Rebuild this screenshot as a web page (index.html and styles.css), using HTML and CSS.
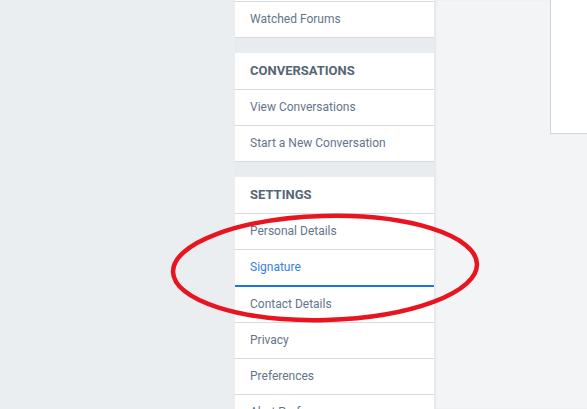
FILE: index.html
```html
<!DOCTYPE html>
<html lang="en">

<head>
  <meta charset="UTF-8">
  <meta name="viewport" content="width=device-width, initial-scale=1.0">
  <title>Account</title>
  <link rel="stylesheet" href="styles.css">
</head>

<body>

  <div class="page-side"></div>

  <nav class="account-nav">
    <div class="nav-block first">
      <a class="nav-item" href="#">Watched Forums</a>
    </div>

    <div class="nav-block">
      <h3 class="nav-head">Conversations</h3>
      <a class="nav-item" href="#">View Conversations</a>
      <a class="nav-item" href="#">Start a New Conversation</a>
    </div>

    <div class="nav-block">
      <h3 class="nav-head">Settings</h3>
      <a class="nav-item" href="#">Personal Details</a>
      <a class="nav-item selected" href="#">Signature</a>
      <a class="nav-item" href="#">Contact Details</a>
      <a class="nav-item" href="#">Privacy</a>
      <a class="nav-item" href="#">Preferences</a>
      <a class="nav-item" href="#">Alert Preferences</a>
    </div>
  </nav>

  <main class="main-area">
    <div class="content-box"></div>
  </main>

  <!-- marker round the signature link -->
  <svg class="marker" width="587" height="409" viewBox="0 0 587 409">
    <ellipse cx="325" cy="268" rx="152" ry="52" transform="rotate(-1.5 325 268)"
      fill="none" stroke="#e8141f" stroke-width="4.5"/>
  </svg>

</body>

</html>
```

FILE: styles.css
```css
body {
  margin: 0;
  padding: 0;
  display: flex;
  height: 409px;
  overflow: hidden;
  background-color: #ebeef1;
  font-family: Roboto, "Liberation Sans", sans-serif;
}

.page-side {
  width: 235px;
  flex-shrink: 0;
}

.account-nav {
  width: 199px;
  flex-shrink: 0;
  display: flex;
  flex-direction: column;
  gap: 15px;
  background-color: #e9ecef;
}

.nav-block {
  display: flex;
  flex-direction: column;
  background-color: #fff;
}

.nav-block.first {
  padding-top: 1px;
}

.nav-block.first .nav-item {
  border-top: 1px solid #d5dbe1;
}

.nav-head {
  margin: 0;
  height: 36px;
  line-height: 36px;
  padding-left: 15px;
  font-size: 13px;
  font-weight: bold;
  text-transform: uppercase;
  color: #566575;
  border-bottom: 1px solid #d5dbe1;
}

.nav-item {
  display: block;
  flex-shrink: 0;
  height: 35px;
  line-height: 35px;
  padding-left: 15px;
  font-size: 12px;
  color: #64758a;
  text-decoration: none;
  border-bottom: 1px solid #d5dbe1;
}

.nav-item.selected {
  color: #3580e6;
  border-bottom: 2px solid #1d74e6;
}

.main-area {
  flex: 1;
  display: flex;
  justify-content: flex-end;
  align-items: flex-start;
  background-color: #f3f4f6;
  box-shadow: inset 2px 0 2px rgba(0, 0, 0, 0.05);
}

.content-box {
  width: 36px;
  height: 133px;
  background-color: #fff;
  border-left: 1px solid #cdd8de;
  border-bottom: 1px solid #cdd8de;
}

.marker {
  position: absolute;
  left: 0;
  top: 0;
  pointer-events: none;
}
```
